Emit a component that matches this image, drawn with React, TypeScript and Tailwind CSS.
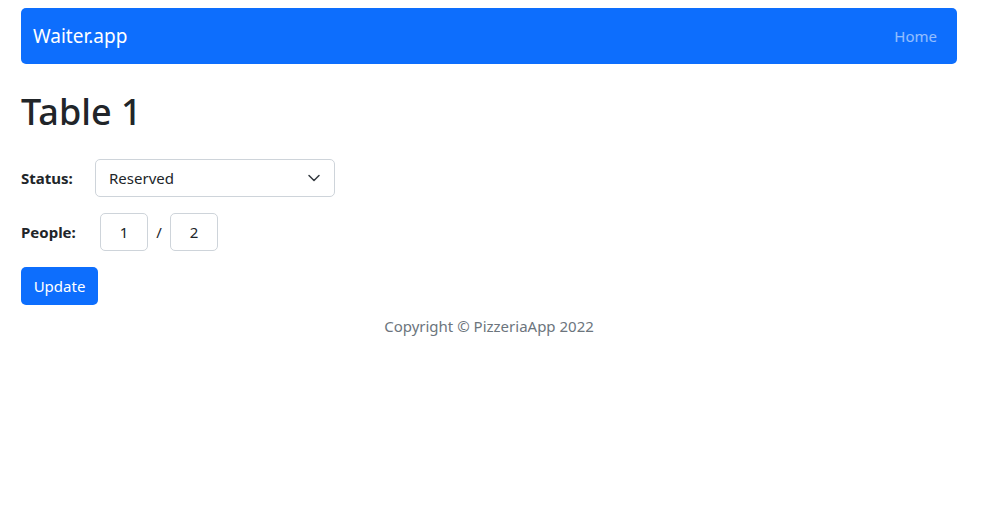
export default function App() {
  return (
    <div
      className="min-h-[521px] bg-white text-[#212529] text-[16px]"
      style={{ fontFamily: '"Noto Sans", "Open Sans", sans-serif' }}
    >
      <div className="ml-[21px] w-[936px] pt-2">
        {/* navbar */}
        <nav className="h-14 rounded-[5px] bg-[#0d6efd] flex items-center justify-between pl-3 pr-5">
          <span className="text-[19px] text-white">Waiter.app</span>
          <span className="text-[15px] text-white/55">Home</span>
        </nav>

        <h1 className="mt-6 mb-[23px] text-[36px] font-medium leading-[48px]">Table 1</h1>

        <div className="flex flex-col gap-4">
          <div className="flex items-center">
            <span className="w-[74px] text-[15px] font-bold">Status:</span>
            <div className="relative w-[240px] h-[38px] border border-[#ced4da] rounded-[5px] flex items-center pl-[13px]">
              <span className="text-[15px]">Reserved</span>
              <svg
                className="absolute right-[13px] top-1/2 -translate-y-1/2"
                width="14"
                height="10"
                viewBox="0 0 16 12"
                fill="none"
                stroke="#343a40"
                strokeWidth="1.8"
                strokeLinecap="round"
                strokeLinejoin="round"
              >
                <path d="m2 3 6 6 6-6" />
              </svg>
            </div>
          </div>

          <div className="flex items-center">
            <span className="w-[79px] text-[15px] font-bold">People:</span>
            <div className="w-12 h-[38px] border border-[#ced4da] rounded-[5px] flex items-center justify-center text-[15px]">
              1
            </div>
            <span className="w-[22px] text-center text-[15px]">/</span>
            <div className="w-12 h-[38px] border border-[#ced4da] rounded-[5px] flex items-center justify-center text-[15px]">
              2
            </div>
          </div>

          <div>
            <button className="h-[38px] w-[77px] rounded-[5px] bg-[#0d6efd] text-white text-[15px]">Update</button>
          </div>
        </div>

        <footer className="mt-[9px] text-center text-[15px] leading-6 text-[#6c757d]">
          Copyright © PizzeriaApp 2022
        </footer>
      </div>
    </div>
  );
}
